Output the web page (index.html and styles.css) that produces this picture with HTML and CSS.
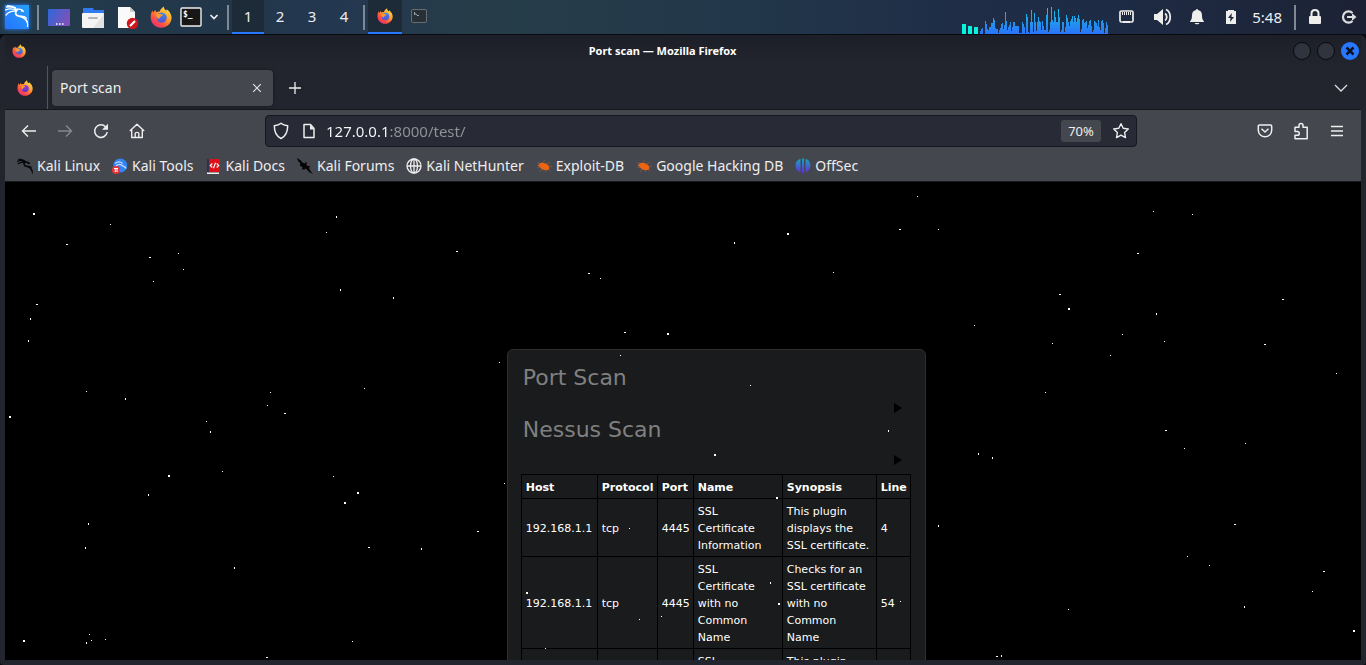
FILE: index.html
```html
<!DOCTYPE html>
<html lang="en">
<head>
<meta charset="utf-8">
<title>Port scan</title>
<link rel="stylesheet" href="styles.css">
</head>
<body>
<svg class="defs" width="0" height="0" aria-hidden="true">
  <defs>
    <linearGradient id="fx-body" x1="0.85" y1="0.1" x2="0.2" y2="0.95"><stop offset="0" stop-color="#ffe04a"/><stop offset="0.4" stop-color="#ff9a2c"/><stop offset="0.75" stop-color="#ff4a44"/><stop offset="1" stop-color="#e8317a"/></linearGradient>
    <linearGradient id="fx-core" x1="0" y1="0" x2="0" y2="1"><stop offset="0" stop-color="#3b8df0"/><stop offset="1" stop-color="#5a4fcf"/></linearGradient>
    <linearGradient id="fx-core2" x1="0" y1="0" x2="0" y2="1"><stop offset="0" stop-color="#a33be0"/><stop offset="1" stop-color="#5b35c9"/></linearGradient>
    <linearGradient id="desk" x1="0" y1="0" x2="1" y2="0.4"><stop offset="0" stop-color="#2f68d8"/><stop offset="1" stop-color="#7a52bb"/></linearGradient>
    <linearGradient id="kali" x1="0" y1="1" x2="1" y2="0"><stop offset="0" stop-color="#2474ff"/><stop offset="1" stop-color="#27a0fb"/></linearGradient>
    <linearGradient id="off" x1="0" y1="0" x2="0" y2="1"><stop offset="0" stop-color="#13a5b8"/><stop offset="0.5" stop-color="#3d68d2"/><stop offset="1" stop-color="#6726d8"/></linearGradient>
    <linearGradient id="wave" gradientUnits="userSpaceOnUse" x1="0" y1="5" x2="0" y2="34"><stop offset="0" stop-color="#0fd0dc"/><stop offset="0.6" stop-color="#2196ee"/><stop offset="1" stop-color="#2b72fb"/></linearGradient>
    <symbol id="fx-shape" viewBox="0 0 20 20">
      <path fill="url(#fx-body)" d="M2.2 4.2 3 6.1 4.6 3.6 5.8 5.6C7 5 8 5 8.6 5.2 9.4 3 11 1.5 12.6.4c-.1 1.6.8 2.8 2 3.8.5-.3.5-.9.5-1.3C17.6 4.5 19.7 7.600 19.600 11 19.400 16 15.300 19.800 10.200 19.800 4.800 19.800.6 15.500.6 10.200.6 7.900 1.200 5.800 2.200 4.200Z"/>
    </symbol>
    <symbol id="firefox" viewBox="0 0 20 20">
      <use href="#fx-shape"/>
      <circle cx="10.500" cy="10.500" r="4.700" fill="url(#fx-core)"/>
      <path fill="#ff982f" d="M5.500 7.500c1.600-.9 3.200-.6 4.700 0 .5.200 1.200.2 1.800.3-.5 1.500-2 1.500-2.700 2.400-.8 1-.4 1.400-1.600 1.300-1.400-.1-2.200-1.700-2.200-4Z"/>
    </symbol>
    <symbol id="firefox2" viewBox="0 0 20 20">
      <use href="#fx-shape"/>
      <circle cx="10.300" cy="10.500" r="4.400" fill="url(#fx-core2)"/>
      <path fill="#ff982f" d="M5.500 7.500c1.600-.9 3.200-.6 4.700 0-.4 1.500-1.600 1.700-2.300 2.600-.5.700-.4 1.400-1.100 1.300-.9-.1-1.300-1.700-1.300-3.900Z"/>
    </symbol>
    <symbol id="dragon" viewBox="0 0 24 24">
      <g fill="none" stroke="currentColor" stroke-linecap="round" stroke-linejoin="round">
        <path stroke-width="2" d="M.8 5.200C5 2.300 9.500 3.800 12.700 6.100M2 8.600C5.500 6.300 8.700 6 11.300 7M2.800 2.200c3.800-.7 6.700.8 8.900 2.500"/>
        <path stroke-width="2.400" d="M11.500 6.400c-1.800 3-.6 5.300 2.400 5.900 3.400.7 6.700 1.900 8.200 6.200"/>
        <path stroke-width="1.600" d="M22.100 18.500c.8 1.600 1 3 .9 4.500M15 12.500c3.200-.5 5 0 6.400 1.500"/>
        <path stroke-width="2" d="M12.400 6c3.500-.2 5 .5 6.500 2.200l-2.600-.6"/>
      </g>
    </symbol>
    <symbol id="bug" viewBox="0 0 16 16">
      <path fill="#ee6411" d="M3 5.500C4.500 4.500 7 4.300 9 5.300c2.300.8 4 2.300 4.500 4.700-.4 1.800-2.200 2.500-4.500 2.100-2.600-.3-5-2-5.600-3.600L1 7l2.300-.2Z"/>
      <path fill="none" stroke="#b06540" stroke-width=".5" d="M1 4.500 5 6M6 5l3-2.500M10 6l4-1.500M12 8l4 .5M5 9l-4 1M6 11l-2 3M9 12l1 2M12 11l2 2.500"/>
    </symbol>
  </defs>
</svg>

<header class="panel">
  <nav class="launchers" aria-label="Launchers">
    <button class="kali-menu" aria-label="Applications"><svg width="34" height="34" viewBox="0 0 34 34"><rect class="kali-glow" x="5" y="5" width="24" height="24" rx="1"/><rect x="5" y="5" width="24" height="24" fill="url(#kali)"/><g fill="none" stroke="#fff" stroke-linecap="round" stroke-linejoin="round"><path stroke-width="1.300" d="M6.500 7c5-.7 7.800.2 10.300 2.400M5.500 10c4.700-2 8-1 10.700.4M6 15c2.300-2.800 5.500-4 9-3.800M7.500 5.700c4 .2 6 .8 8 2.200"/><path stroke-width="1.800" d="M17.300 9.500c-3 3-2 6 1.500 6.600 3.700.6 6.600 1.700 8.100 5.400"/><path stroke-width="1.200" d="M26.900 21.500c.9 1.700.9 3.300.6 5M17 9.300c3.500-.6 5.600.2 6.500 2l-2.200-.4M19.500 16.300c3.700-.5 5.600.4 7 1.900"/></g></svg></button>
    <span class="divider"></span>
    <button class="launch" aria-label="Show desktop"><svg width="24" height="24"><rect x="1" y="4" width="22" height="17" rx="1" fill="url(#desk)"/><path stroke="#fff" stroke-width="1.500" d="M9 19h1.500M12 19h1.500M15 19h1.500"/></svg></button>
    <button class="launch" aria-label="Files"><svg width="24" height="24"><path fill="#2f7bef" d="M2 3h10l1 2h10v5H2Z"/><rect x="1" y="8" width="22" height="15" rx="1" fill="#f4f4f4"/><path d="M23 9v14H12Z" fill="#e3e3e3"/><path stroke="#b5b5b5" stroke-width="2" d="M8 13h8" stroke-linecap="round"/></svg></button>
    <button class="launch" aria-label="Text editor"><svg width="24" height="24"><path fill="#fafafa" d="M3 2h12l5 5v16H3Z"/><path fill="#ccc" d="M15 2v5h5Z"/><circle cx="17.500" cy="18.500" r="5.700" fill="#d2161d"/><path stroke="#fff" stroke-width="2.200" d="m15 21 5-5"/></svg></button>
    <button class="launch" aria-label="Firefox"><svg width="22" height="22"><use href="#firefox"/></svg></button>
    <button class="launch terminal" aria-label="Terminal"><svg width="22" height="20"><rect x="1" y="1" width="20" height="18" rx="1" fill="#171717" stroke="#eee" stroke-width="1.400"/><text class="prompt" x="3" y="10">$_</text></svg></button>
    <button class="more" aria-label="More terminals"><svg width="10" height="8"><path d="m1.500 2 3.500 3.500L8.500 2" fill="none" stroke="#eee" stroke-width="1.700"/></svg></button>
    <span class="divider"></span>
  </nav>
  <nav class="spaces" aria-label="Workspaces">
    <button class="space active">1</button><button class="space">2</button><button class="space">3</button><button class="space">4</button>
    <span class="divider"></span>
    <button class="task active" aria-label="Port scan — Mozilla Firefox"><svg width="16" height="16"><use href="#firefox"/></svg></button>
    <button class="task" aria-label="Terminal window"><svg width="16" height="14"><rect x=".5" y=".5" width="15" height="13" rx="1.500" fill="#273036" stroke="#686e70"/><path fill="none" stroke="#9ca1a1" d="M3.500 3v3M4 4.500l2 1.500M6 6.500h2"/></svg></button>
  </nav>
  <div class="tray">
    <svg class="spectrum" width="146" height="34" viewBox="0 0 146 34" aria-hidden="true"><path fill="#06f3dc" d="M0 24h4v10H0ZM6 26h4v8H6ZM12 27h4v7h-4Z"/><path id="spectrum-bars" fill="url(#wave)"/></svg>
    <button class="status network" aria-label="Network"><svg width="16" height="16"><rect x="1" y="2" width="13" height="11" rx="1.500" fill="none" stroke="#eeeeec" stroke-width="1.700"/><path stroke="#eeeeec" d="M3.500 3v3M5.500 3v3M7.500 3v3M9.500 3v3M11.500 3v3"/><path fill="#eeeeec" d="M4 12h7v2H4Z"/></svg></button>
    <button class="status" aria-label="Volume"><svg width="20" height="18"><path fill="#eeeeec" d="M1 6h3l6-5v16l-6-5H1Z"/><path fill="none" stroke="#eeeeec" stroke-width="1.800" d="M12 5.500c2.300 1.500 2.300 5.500 0 7M13 1.500c5.600 2.500 5.600 12.500 0 15"/></svg></button>
    <button class="status" aria-label="Notifications"><svg width="16" height="18"><path fill="#eeeeec" d="M7 2a1 1 0 0 1 2 0c2.800.6 4 2.600 4 5.300 0 3.500.6 4.500 2 6.200V14H1v-.5c1.400-1.700 2-2.700 2-6.200C3 4.600 4.200 2.600 7 2ZM5.500 15h5c-.7 1.800-4.300 1.800-5 0Z"/></svg></button>
    <button class="status" aria-label="Battery"><svg width="12" height="16"><path fill="#eeeeec" d="M1 2h2V1h6v1h2v13H1Z"/><path fill="#20293b" d="M6.800 4 3 9h2.500L5 13l4-5H6.500Z"/></svg></button>
    <time class="clock">5:48</time>
    <span class="divider"></span>
    <button class="status lock" aria-label="Lock screen"><svg width="14" height="18"><path fill="none" stroke="#eeeeec" stroke-width="2" d="M3.500 9V5.500C3.500.8 10.500.8 10.500 5.500V9"/><rect x="1" y="8" width="12" height="8" rx="1" fill="#eeeeec"/></svg></button>
    <button class="status" aria-label="Log out"><svg width="16" height="16"><path fill="none" stroke="#dcdddd" stroke-width="2.200" d="M11.500 4A5.600 5.600 0 1 0 11.500 12"/><path fill="#dcdddd" d="M6 7h5V4.200L15.500 8 11 11.800V9H6Z"/></svg></button>
  </div>
</header>

<main class="window">
  <div class="titlebar">
    <svg width="14" height="14"><use href="#firefox"/></svg>
    <span class="title">Port scan — Mozilla Firefox</span>
    <button class="control" aria-label="Minimise"></button>
    <button class="control" aria-label="Maximise"></button>
    <button class="control close" aria-label="Close"><svg width="18" height="18"><path stroke="#0c1222" stroke-width="2.500" d="m5.500 5.500 7 7m0-7-7 7"/></svg></button>
  </div>

  <div class="tabs">
    <button class="pinned" aria-label="Firefox View"><svg width="16" height="16"><use href="#firefox2"/></svg></button>
    <div class="tab"><span class="tab-name">Port scan</span><button class="tab-close" aria-label="Close tab"><svg width="10" height="10"><path stroke="#e3e3e5" stroke-width="1.200" d="m1.200 1.200 7.600 7.600m0-7.600-7.600 7.600"/></svg></button></div>
    <button class="tool" aria-label="New tab"><svg width="14" height="14"><path stroke="#eee" stroke-width="1.300" d="M7 1v12M1 7h12"/></svg></button>
    <button class="tool all-tabs" aria-label="List all tabs"><svg width="14" height="8"><path fill="none" stroke="#ddd" stroke-width="1.300" d="m1 1 6 6 6-6"/></svg></button>
  </div>

  <div class="toolbar">
    <button class="tool" aria-label="Back"><svg width="16" height="14"><path fill="none" stroke="#eee" stroke-width="1.400" d="M15 7H1.500M7 1.500 1.500 7 7 12.500"/></svg></button>
    <button class="tool" aria-label="Forward" disabled><svg width="16" height="14"><path fill="none" stroke="#89898c" stroke-width="1.400" d="M1 7h13.500M9 1.500 14.500 7 9 12.500"/></svg></button>
    <button class="tool" aria-label="Reload"><svg width="16" height="16"><path fill="none" stroke="#eee" stroke-width="1.500" d="M14.200 9A6.300 6.300 0 1 1 12.500 3.700"/><path fill="#eee" d="M15 .8v6H9Z"/></svg></button>
    <button class="tool" aria-label="Home"><svg width="16" height="16"><path fill="none" stroke="#eee" stroke-width="1.400" stroke-linejoin="round" d="M.8 8 8 1.200 15.200 8M2.700 6.500v8h10.600v-8M6.200 14.500V10.300c0-1.300 3.600-1.300 3.600 0v4.200"/></svg></button>
    <form class="address">
      <svg width="16" height="18"><path fill="none" stroke="#eee" stroke-width="1.500" stroke-linejoin="round" d="M8 1.200C6 3 3.800 3.500 1.300 3.800 1.300 9.500 3 14.200 8 16.500 13 14.200 14.700 9.500 14.700 3.800 12.200 3.500 10 3 8 1.200Z"/></svg>
      <svg width="12" height="16"><path fill="none" stroke="#eee" stroke-width="1.500" stroke-linejoin="round" d="M1 1.500h6.500l3.500 4v9H1Z"/><path fill="#eee" d="M7 1.500v5h4Z"/></svg>
      <input class="url" type="text" aria-label="Address" value="127.0.0.1:8000/test/">
      <button class="zoom" type="button">70%</button>
      <button class="star" type="button" aria-label="Bookmark this page"><svg width="18" height="18"><path fill="none" stroke="#eee" stroke-width="1.400" stroke-linejoin="round" d="m9 1.700 2.200 4.600 5.100.7-3.700 3.500.9 5.100L9 13.100l-4.500 2.500.9-5.100L1.700 7l5.100-.7Z"/></svg></button>
    </form>
    <button class="tool" aria-label="Save to Pocket"><svg width="16" height="14"><path fill="none" stroke="#eee" stroke-width="1.500" stroke-linejoin="round" d="M2.500 1h11c.8 0 1.200.4 1.200 1.200V6c0 9-13.400 9-13.400 0V2.200C1.300 1.400 1.700 1 2.500 1ZM4.500 4.800 8 8l3.500-3.200"/></svg></button>
    <button class="tool" aria-label="Extensions"><svg width="16" height="18"><path fill="none" stroke="#eee" stroke-width="1.500" stroke-linejoin="round" d="M2 5.200h4V3.500c0-2.800 4-2.800 4 0v1.700h4.200v11.600H2v-3.500h2.500c2.300 0 2.300-3.800 0-3.800H2Z"/></svg></button>
    <button class="tool" aria-label="Menu"><svg width="14" height="12"><path stroke="#eee" stroke-width="1.300" d="M1 1.500h12M1 6h12M1 10.500h12"/></svg></button>
  </div>

  <nav class="bookmarks" aria-label="Bookmarks">
    <a href="#"><svg class="dark" width="16" height="16"><use href="#dragon"/></svg>Kali Linux</a>
    <a href="#"><svg width="16" height="16"><circle cx="8.300" cy="7.500" r="7" fill="#3184f2"/><path fill="none" stroke="#c6ddfb" stroke-width="1.300" d="M3 5.500c3-2.200 6-1.500 7.500 0M4 8c2-1.800 4-1.800 5.500-1 1.500 1.700 4 1 4.500 3.500"/><circle cx="4" cy="12" r="4" fill="#e93239"/><path stroke="#fff" d="M2 10.500h4M3.300 10.500V14M5 10.500V14"/></svg>Kali Tools</a>
    <a href="#"><svg width="16" height="16"><path fill="#26354a" d="M1 1h3v13H1Z"/><path fill="#df1017" d="M3 1h11v13H3Z"/><path fill="#eee" d="M1 14.500h12V16H1Z"/><path fill="none" stroke="#fff" stroke-width="1.100" d="m6.300 5.500-2 2 2 2M10.700 5.500l2 2-2 2M9.500 4.800 7.500 10.200"/></svg>Kali Docs</a>
    <a href="#"><svg width="16" height="16"><path fill="#050505" d="M0 0l4 2.500 1.500 2L9 6l3 4 1.500 3L16 16l-4-2-2.500-3L6 10 3.500 7.500 3 5 1 3Z"/><path stroke="#050505" stroke-width="1.300" d="m3 7 2 .5M8 5l2 .3M5 10.500l3 .3M11 9l2-.3"/></svg>Kali Forums</a>
    <a href="#"><svg width="16" height="16"><g fill="none" stroke="#eee" stroke-width="1.300"><circle cx="8" cy="8" r="7"/><ellipse cx="8" cy="8" rx="3.500" ry="7"/><path d="M1 8h14M8 1v14"/></g></svg>Kali NetHunter</a>
    <a href="#"><svg width="16" height="16"><use href="#bug"/></svg>Exploit-DB</a>
    <a href="#"><svg width="16" height="16"><use href="#bug"/></svg>Google Hacking DB</a>
    <a href="#"><svg width="16" height="16"><path fill="url(#off)" d="M5.500 1v13C-1 13-1 2 5.500 1ZM7 .5h2v15H7ZM10.500 1c6.500 1 6.500 12 0 13Z"/></svg>OffSec</a>
  </nav>

  <div class="page">
    <section class="report">
      <h2>Port Scan</h2>
      <button class="toggle" aria-label="Show port scan"><svg width="8" height="10"><path d="M0 0v10l8-5Z"/></svg></button>
      <h2>Nessus Scan</h2>
      <button class="toggle" aria-label="Show Nessus scan"><svg width="8" height="10"><path d="M0 0v10l8-5Z"/></svg></button>
      <table>
        <colgroup><col class="host"><col class="protocol"><col class="port"><col class="name"><col class="synopsis"><col class="line"></colgroup>
        <thead><tr><th>Host</th><th>Protocol</th><th>Port</th><th>Name</th><th>Synopsis</th><th>Line</th></tr></thead>
        <tbody>
          <tr><td>192.168.1.1</td><td>tcp</td><td>4445</td><td>SSL Certificate Information</td><td>This plugin displays the SSL certificate.</td><td>4</td></tr>
          <tr><td>192.168.1.1</td><td>tcp</td><td>4445</td><td>SSL Certificate with no Common Name</td><td>Checks for an SSL certificate with no Common Name</td><td>54</td></tr>
          <tr><td>192.168.1.1</td><td>tcp</td><td>4445</td><td>SSL Certificate Information</td><td>This plugin displays the SSL certificate.</td><td>4</td></tr>
        </tbody>
      </table>
    </section>
    <svg class="stars" viewBox="5 182 1356 478" preserveAspectRatio="xMinYMin slice" aria-hidden="true"><path id="star-field" fill="#fff"/></svg>
  </div>
</main>
<script src="script.js"></script>
</body>
</html>
```

FILE: styles.css
```css
* { box-sizing: border-box; }

body {
  margin: 0;
  height: 100vh;
  display: flex;
  flex-direction: column;
  overflow: hidden;
  background: #090b10;
  color: #eeeeee;
  font: 14px/20px "Noto Sans", sans-serif;
}

button {
  display: flex;
  align-items: center;
  justify-content: center;
  flex: none;
  margin: 0;
  padding: 0;
  border: 0;
  background: none;
  color: inherit;
  font: inherit;
}

svg { display: block; flex: none; }
.defs { position: absolute; }

/* Desktop panel */
.panel {
  display: flex;
  flex: none;
  height: 34px;
  font-size: 15px;
  background: linear-gradient(90deg, #233c4c 0, #22364a 17%, #233750 24%, #263d49 35%, #22374a 55%, #1f2d46 70%, #1e2b44 82%, #1c2234 100%);
}
.launchers, .spaces, .tray { display: flex; align-items: center; }
.divider { width: 2px; height: 25px; background: #808891; }
.kali-menu { width: 34px; height: 34px; }
.kali-glow { fill: #2779ff; filter: blur(2px); }
.kali-menu + .divider { margin: 0 3px; }
.launch { width: 34px; height: 34px; }
.launch.terminal { width: 26px; }
.prompt { fill: #ffffff; font: bold 8px "DejaVu Sans Mono", monospace; }
.more { width: 20px; height: 34px; }
.more + .divider { margin: 0 3px; }
.space { width: 32px; height: 34px; padding-bottom: 1px; border-bottom: 2px solid transparent; }
.task { width: 34px; height: 34px; border-bottom: 2px solid transparent; }
.spaces .divider { margin: 0 3px; }
.space.active, .task.active { background: #1d2a38; border-color: #2777ff; }
.tray { margin-left: auto; }
.spectrum { margin-right: 2px; }
.status { width: 34px; height: 34px; }
.network { margin-right: 2px; }
.clock { padding: 0 12px 0 4px; }
.status.lock { margin-left: 2px; }

/* Browser window */
.window {
  flex: 1;
  min-height: 0;
  display: flex;
  flex-direction: column;
  margin-top: 1px;
  border: 5px solid #22252e;
  border-top-width: 0;
  border-radius: 6px 6px 4px 4px;
  background: #22252e;
  overflow: hidden;
}
.titlebar {
  display: flex;
  flex: none;
  align-items: center;
  gap: 6px;
  height: 31px;
  padding: 0 2px 0 7px;
  background: linear-gradient(#1c1f27, #22252e);
}
.title { flex: 1; padding-left: 6px; text-align: center; font-size: 11px; font-weight: bold; color: #ffffff; }
.control { width: 18px; height: 18px; border: 1px solid #08090c; border-radius: 50%; background: #30343e; }
.control.close { border: 0; background: #2777ff; }

.tabs { display: flex; flex: none; align-items: center; height: 44px; padding-right: 2px; border-bottom: 1px solid #15171d; }
.pinned { width: 43px; height: 43px; padding-right: 2px; border-right: 1px solid #54565e; }
.tab {
  display: flex;
  align-items: center;
  justify-content: space-between;
  width: 221px;
  height: 36px;
  margin: 0 4px;
  padding: 0 8px;
  border-radius: 4px;
  background: #45474e;
  box-shadow: 0 0 3px #15171d;
}
.tab-close { width: 16px; height: 16px; }
.tool { width: 36px; height: 32px; }
.all-tabs { margin-left: auto; }

.toolbar { display: flex; flex: none; align-items: center; height: 41px; padding: 0 6px; background: #45474e; }
.address {
  display: flex;
  flex: 1;
  align-items: center;
  gap: 14px;
  height: 32px;
  margin: 0 110px;
  padding: 0 6px 0 7px;
  border: 1px solid #15171d;
  border-radius: 4px;
  background: #282a36;
}
.url {
  flex: 1;
  min-width: 0;
  margin-left: -3px;
  padding: 0;
  border: 0;
  outline: 0;
  background: linear-gradient(90deg, #fbfbfe 61px, #929298 61px);
  background-clip: text;
  -webkit-background-clip: text;
  color: transparent;
  font: 15px/20px "Noto Sans", sans-serif;
}
.zoom { width: 40px; height: 22px; margin-right: -3px; border-radius: 3px; background: #45474e; font-size: 13px; }

.bookmarks {
  display: flex;
  flex: none;
  align-items: center;
  gap: 12px;
  height: 31px;
  padding: 0 12px;
  border-bottom: 1px solid #15171d;
  background: #45474e;
}
.bookmarks a { display: flex; align-items: center; gap: 4px; color: #eeeeee; text-decoration: none; white-space: nowrap; }
.dark { color: #08090a; }

/* Scan report */
.page { position: relative; flex: 1; min-height: 0; overflow: hidden; background: #000000; }
.stars { position: absolute; inset: 0; width: 100%; height: 100%; pointer-events: none; shape-rendering: crispEdges; }
.report {
  width: fit-content;
  margin: 167px 0 0 37%;
  padding: 14px 14px 14px 13px;
  border: 1px solid #2e2e2e;
  border-radius: 6px;
  background: #1a1b1c;
  font-family: "DejaVu Sans", sans-serif;
}
.report h2 { margin: 0; padding-left: 2px; color: #808080; font-size: 22px; line-height: 28px; font-weight: normal; }
.toggle { width: 8px; height: 16px; margin: 8px 9px 0 auto; }
.report table { width: 390px; margin-top: 6px; border-collapse: collapse; table-layout: fixed; color: #ffffff; font-size: 11px; line-height: 17px; }
.report th, .report td { padding: 4px 4px 2px; border: 1px solid #000000; text-align: left; }
.host { width: 76px; }
.protocol { width: 60px; }
.port { width: 36px; }
.name { width: 89px; }
.synopsis { width: 94px; }
.line { width: 34px; }
```

FILE: script.js
```js
// Stars as [x, y] pairs, grouped by their width and height in pixels.
const stars = {
  "1,1": [[110,224],[178,253],[183,269],[153,281],[326,232],[499,362],[86,391],[270,392],[364,388],[267,405],[206,421],[222,471],[333,476],[89,634],[91,640],[105,639],[352,641],[600,278],[833,272],[620,355],[750,385],[504,483],[629,528],[639,619],[661,616],[545,648],[900,601],[917,196],[938,229],[1153,211],[1192,214],[974,325],[1122,334],[1164,341],[1052,343],[1110,355],[1336,373],[1045,392],[1184,448],[1245,443],[1187,556],[1209,565],[1312,591],[1068,609]],
  "2,1": [[66,244],[149,257],[36,304],[456,251],[284,413],[477,531],[368,547],[266,657],[588,273],[624,332],[899,229],[1137,253],[1059,294],[1282,299],[1264,344],[1165,430],[1234,524],[1323,571],[996,656]],
  "1,2": [[30,318],[28,340],[336,216],[340,289],[393,297],[125,398],[210,431],[148,494],[88,523],[85,547],[421,548],[234,567],[86,642],[734,242],[888,430],[770,582],[707,639],[1156,313],[978,453],[992,457],[938,525],[1244,606],[1001,655]],
  "2,2": [[33,213],[9,416],[168,475],[357,492],[344,502],[23,640],[787,233],[667,333],[714,454],[776,497],[778,603],[526,592],[1068,308],[1353,630]]
};
const field = Object.entries(stars).map(([size, points]) => {
  const [w, h] = size.split(",");
  return points.map(([x, y]) => `M${x} ${y}h${w}v${h}h-${w}Z`).join("");
});
document.getElementById("star-field").setAttribute("d", field.join(""));

// Audio levels, one per pixel column.
const levels = [3,5,6,0,0,13,10,5,4,7,7,11,11,16,14,6,5,5,1,4,6,10,11,5,9,22,13,4,7,9,12,3,7,12,12,8,8,8,8,1,1,1,12,10,7,1,20,17,2,1,12,24,12,2,21,12,3,12,17,13,12,4,13,8,4,4,19,26,2,4,12,27,14,12,23,17,12,12,25,17,2,4,12,12,2,7,19,16,12,8,13,15,18,12,18,16,12,16,19,15,2,5,14,15,11,12,13,6,9,13,14,8,2,4,13,12,11,8,14,7,4,13,14,11,1,6,12,9];
document.getElementById("spectrum-bars").setAttribute("d",
  levels.map((level, i) => `M${18 + i} ${34 - level}h1V34h-1Z`).join(""));
```
